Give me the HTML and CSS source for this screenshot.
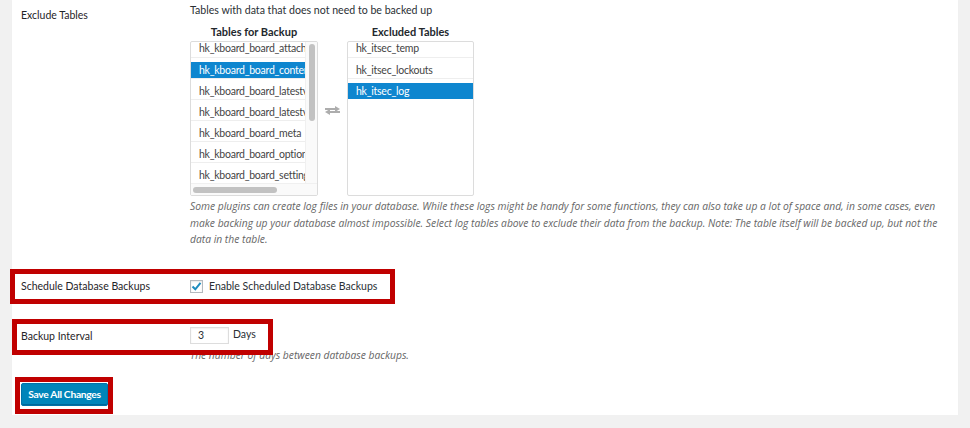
FILE: index.html
```html
<!DOCTYPE html>
<html>
<head>
<meta charset="utf-8">
<link rel="stylesheet" href="styles.css">
</head>
<body>
<div class="panel">
  <div class="row row-exclude">
    <div class="label label-exclude">Exclude Tables</div>
    <div class="field">
      <div class="intro">Tables with data that does not need to be backed up</div>
      <div class="lists">
        <div class="listcol">
          <div class="listhead">Tables for Backup</div>
          <div class="listbox scroll">
            <div class="listinner">
              <div class="opt first"><span>hk_kboard_board_attach</span></div>
              <div class="opt sel"><span>hk_kboard_board_content</span></div>
              <div class="opt"><span>hk_kboard_board_latestview</span></div>
              <div class="opt"><span>hk_kboard_board_latestview_link</span></div>
              <div class="opt"><span>hk_kboard_board_meta</span></div>
              <div class="opt"><span>hk_kboard_board_option</span></div>
              <div class="opt"><span>hk_kboard_board_setting</span></div>
            </div>
            <div class="vbar"><div class="vthumb"></div></div>
            <div class="hbar"><div class="hthumb"></div></div>
          </div>
        </div>
        <div class="swap">
          <svg width="17" height="9" viewBox="0 0 17 9">
            <rect x="1" y="2" width="11" height="2" fill="#adadad"/>
            <path d="M11 0 L16 3 L11 6 Z" fill="#adadad"/>
            <rect x="5" y="5" width="11" height="2" fill="#adadad"/>
            <path d="M6 3 L1 6 L6 9 Z" fill="#adadad"/>
          </svg>
        </div>
        <div class="listcol">
          <div class="listhead">Excluded Tables</div>
          <div class="listbox">
            <div class="listinner">
              <div class="opt first"><span>hk_itsec_temp</span></div>
              <div class="opt"><span>hk_itsec_lockouts</span></div>
              <div class="opt sel last"><span>hk_itsec_log</span></div>
            </div>
          </div>
        </div>
      </div>
      <p class="desc desc-long">Some plugins can create log files in your database. While these logs might be handy for some functions, they can also take up a lot of space and, in some cases, even make backing up your database almost impossible. Select log tables above to exclude their data from the backup. Note: The table itself will be backed up, but not the data in the table.</p>
    </div>
  </div>

  <div class="row row-schedule">
    <div class="label">Schedule Database Backups</div>
    <div class="field check-field">
      <span class="checkbox">
        <svg width="11" height="11" viewBox="0 0 11 11"><path d="M1.5 5.5 L4.3 8.3 L9.5 1.8" fill="none" stroke="#1e8cbe" stroke-width="2"/></svg>
      </span>
      <span class="check-label">Enable Scheduled Database Backups</span>
    </div>
  </div>

  <div class="row row-interval">
    <div class="label label-interval">Backup Interval</div>
    <div class="field">
      <div class="interval-line">
        <span class="numinput">3</span>
        <span class="days">Days</span>
      </div>
      <p class="desc desc-short">The number of days between database backups.</p>
    </div>
  </div>

  <div class="actions">
    <span class="button">Save All Changes</span>
  </div>

  <div class="mark mark-schedule"></div>
  <div class="mark mark-interval"></div>
  <div class="mark mark-save"></div>
</div>
</body>
</html>
```

FILE: styles.css
```css
* { box-sizing: border-box; }
html, body {
  margin: 0;
  padding: 0;
  background: #f1f1f1;
  font-family: Lato, "Open Sans", sans-serif;
  font-size: 10.5px;
  color: #2a2f34;
}
.panel {
  position: relative;
  margin-left: 12px;
  width: 946px;
  height: 415px;
  background: #fff;
  box-shadow: 0 1px 1px rgba(0,0,0,0.04);
  padding-left: 9px;
}
.row {
  display: grid;
  grid-template-columns: 169px 1fr;
}
.label { color: #1f2428; }
.label-exclude { padding-top: 9px; }
.intro {
  height: 22px;
  padding-top: 4px;
  font-size: 10.6px;
}
.lists {
  display: flex;
  align-items: flex-start;
}
.listcol {
  display: flex;
  flex-direction: column;
  width: 128px;
}
.listcol:last-child { width: 127px; }
.listhead {
  text-align: center;
  font-weight: 700;
  font-size: 11px;
  height: 19px;
  line-height: 19px;
  color: #23282d;
}
.listbox {
  position: relative;
  height: 155px;
  border: 1px solid #dcdcdc;
  border-radius: 2px;
  overflow: hidden;
  background: #fff;
}
.listinner { width: 100%; }
.scroll .listinner { width: 115px; overflow: hidden; }
.opt {
  height: 21px;
  border-bottom: 1px solid #eeeeee;
  padding-top: 4px;
  white-space: nowrap;
  overflow: hidden;
  color: #444;
  letter-spacing: -0.25px;
}
.opt.first { height: 16px; padding-top: 0; }
.opt.last { border-bottom: none; }
.opt span {
  display: block;
  height: 16px;
  line-height: 16px;
  padding-left: 8px;
}
.opt.first span { line-height: 13px; }
.opt.sel span {
  background: #0e86cf;
  color: #fff;
}
.vbar {
  position: absolute;
  top: 0;
  right: 0;
  width: 12px;
  height: 141px;
  background: #fafafa;
  border-left: 1px solid #f0f0f0;
}
.vthumb {
  position: absolute;
  left: 3px;
  top: 2px;
  width: 6px;
  height: 77px;
  border-radius: 3px;
  background: #c2c2c2;
}
.hbar {
  position: absolute;
  left: 0;
  bottom: 0;
  width: 126px;
  height: 12px;
  background: #fafafa;
  border-top: 1px solid #f0f0f0;
}
.hthumb {
  position: absolute;
  left: 2px;
  top: 3px;
  width: 84px;
  height: 6px;
  border-radius: 3px;
  background: #c2c2c2;
}
.swap {
  width: 29px;
  height: 155px;
  margin-top: 19px;
  padding-bottom: 16px;
  display: flex;
  align-items: center;
  justify-content: center;
}
.desc {
  margin: 0;
  font-family: "Open Sans", sans-serif;
  font-style: italic;
  color: #666;
}
.desc-long {
  width: 760px;
  padding-top: 2px;
  line-height: 16.5px;
  font-size: 10.3px;
}
.row-schedule { margin-top: 32px; align-items: center; }
.check-field { display: flex; align-items: center; gap: 6px; }
.checkbox {
  width: 13px;
  height: 13px;
  border: 1px solid #b4b9be;
  box-shadow: inset 0 1px 2px rgba(0,0,0,0.1);
  display: flex;
  align-items: center;
  justify-content: center;
}
.row-interval { margin-top: 31px; }
.label-interval { padding-top: 6px; }
.interval-line { display: flex; align-items: center; gap: 4px; margin-top: 3px; }
.numinput {
  width: 39px;
  height: 17px;
  border: 1px solid #dddddd;
  box-shadow: inset 0 1px 2px rgba(0,0,0,0.07);
  padding-left: 7px;
  line-height: 15px;
}
.days { padding-bottom: 2px; }
.desc-short { padding-top: 4px; line-height: 14px; font-size: 10.3px; }
.actions { margin-top: 21px; }
.button {
  display: inline-block;
  width: 87px;
  height: 23px;
  line-height: 21px;
  text-align: center;
  background: #0085ba;
  border: 1px solid #0073aa;
  box-shadow: inset 0 -1px 0 #006799;
  border-radius: 2px;
  color: #fff;
  font-weight: 700;
  font-size: 10.3px;
  letter-spacing: -0.3px;
}
.mark {
  position: absolute;
  border: 5px solid #c00000;
}
.mark-schedule { left: -2px; top: 269px; width: 385px; height: 35px; }
.mark-interval { left: 0px; top: 319px; width: 261px; height: 36px; }
.mark-save { left: 3px; top: 377px; width: 98px; height: 37px; }
```
